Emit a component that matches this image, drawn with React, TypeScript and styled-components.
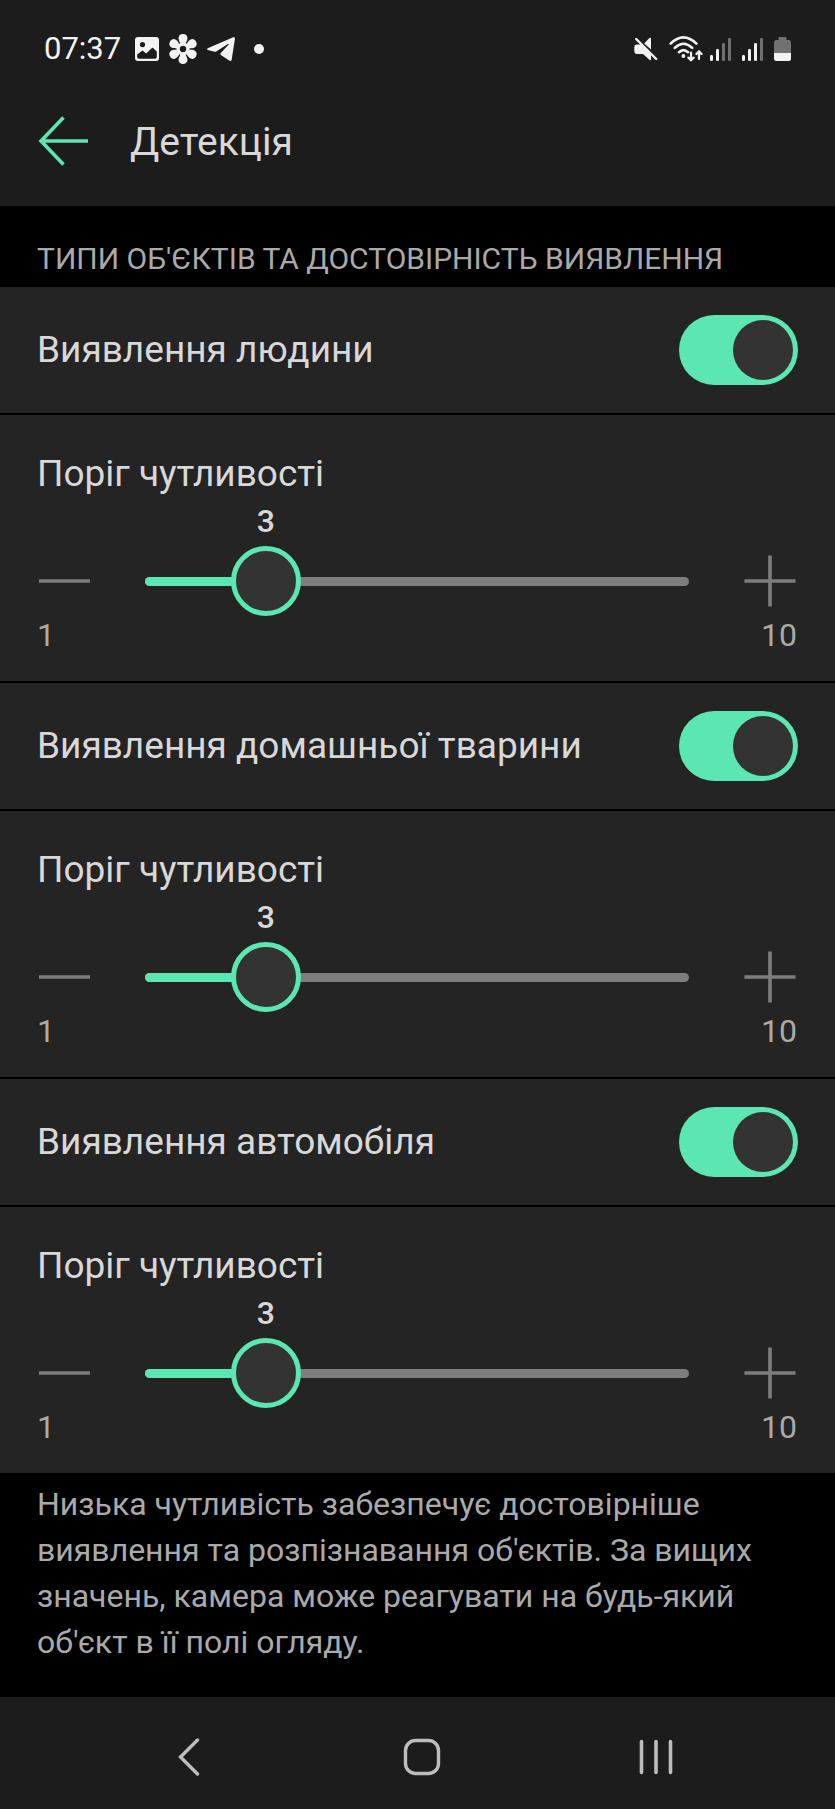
import React, { useId, useState } from "react";
import styled, { createGlobalStyle } from "styled-components";

const color = {
  bar: "#1c1c1c",
  row: "#242424",
  accent: "#5ce6b4",
  knob: "#333333",
  rail: "#7d7d7d",
  text: "#d8d8d8",
  muted: "#aaaaaa",
  status: "#f2f2f2",
  nav: "#bdbdbd",
};

const GlobalStyle = createGlobalStyle`
  *, *::before, *::after { box-sizing: border-box; }
  body {
    margin: 0;
    background: #000;
    color: ${color.text};
    font-family: Roboto, "Noto Sans", sans-serif;
  }
`;

const Screen = styled.div`
  display: flex;
  flex-direction: column;
  min-height: 100vh;
`;

const StatusBar = styled.div`
  display: flex;
  justify-content: space-between;
  align-items: center;
  height: 76px;
  padding: 22px 44px 0;
  background: ${color.bar};
  color: ${color.status};
`;

const StatusGroup = styled.div<{ $gap: number }>`
  display: flex;
  align-items: center;
  gap: ${(p) => p.$gap}px;

  svg {
    display: block;
  }
`;

const Clock = styled.time`
  margin-right: 5px;
  font-size: 31px;
  line-height: 36px;
`;

const Dot = styled.span`
  width: 10px;
  height: 10px;
  margin-left: 10px;
  border-radius: 50%;
  background: ${color.status};
`;

const Header = styled.header`
  display: flex;
  align-items: center;
  gap: 42px;
  height: 130px;
  padding: 0 38px;
  background: ${color.bar};
`;

const IconButton = styled.button`
  display: flex;
  align-items: center;
  justify-content: center;
  padding: 0;
  border: 0;
  background: none;
  color: inherit;
  cursor: pointer;
`;

const BackButton = styled(IconButton)`
  color: ${color.accent};
`;

const Title = styled.h1`
  margin: 0;
  padding-top: 2px;
  font-size: 39px;
  font-weight: 400;
  line-height: 44px;
`;

const SectionTitle = styled.h2`
  margin: 0;
  padding: 35px 37px 10px;
  color: ${color.muted};
  font-size: 30px;
  font-weight: 400;
  line-height: 36px;
  text-transform: uppercase;
`;

const Settings = styled.div`
  display: flex;
  flex-direction: column;
  gap: 2px;
`;

const ToggleRow = styled.label`
  display: flex;
  align-items: center;
  justify-content: space-between;
  height: 126px;
  padding: 0 37px;
  background: ${color.row};
  font-size: 37px;
  line-height: 44px;
`;

const Switch = styled.input`
  appearance: none;
  flex: none;
  display: flex;
  align-items: center;
  width: 119px;
  height: 70px;
  margin: 0;
  padding: 0 5px;
  border-radius: 35px;
  background: ${color.rail};
  cursor: pointer;

  &::before {
    content: "";
    width: 60px;
    height: 60px;
    border-radius: 50%;
    background: ${color.knob};
  }

  &:checked {
    justify-content: flex-end;
    background: ${color.accent};
  }
`;

const SliderPanel = styled.section`
  height: 266px;
  padding: 37px 38px 0 37px;
  background: ${color.row};
`;

const SliderLabel = styled.label`
  display: block;
  font-size: 37px;
  line-height: 44px;
`;

const SliderRow = styled.div`
  display: flex;
  align-items: center;
  margin-top: 50px;
`;

const StepButton = styled(IconButton)`
  width: 54px;
  height: 70px;
  color: ${color.rail};
`;

const SliderTrack = styled.div`
  position: relative;
  flex: 1;
  display: grid;
  align-items: center;
  margin: 0 54px;
`;

const Rail = styled.div`
  grid-area: 1 / 1;
  height: 9px;
  border-radius: 5px;
  background: ${color.rail};
  overflow: hidden;
`;

const Fill = styled.div`
  height: 100%;
  background: ${color.accent};
`;

const Range = styled.input`
  grid-area: 1 / 1;
  appearance: none;
  height: 70px;
  margin: 0 -35px;
  background: none;
  cursor: pointer;

  &::-webkit-slider-thumb {
    appearance: none;
    width: 70px;
    height: 70px;
    border: 5px solid ${color.accent};
    border-radius: 50%;
    background: ${color.knob};
  }
`;

const Value = styled.output`
  position: absolute;
  bottom: 100%;
  transform: translateX(-50%);
  padding-bottom: 6px;
  font-size: 32px;
  font-weight: 500;
  line-height: 38px;
`;

const Limits = styled.div`
  display: flex;
  justify-content: space-between;
  color: ${color.muted};
  font-size: 32px;
  line-height: 38px;
`;

const Hint = styled.p`
  flex: 1;
  margin: 0;
  padding: 8px 37px 31px;
  color: ${color.muted};
  font-size: 32px;
  line-height: 46px;
`;

const NavBar = styled.nav`
  display: grid;
  grid-template-columns: repeat(3, 1fr);
  height: 112px;
  padding: 8px 62px 0 72px;
  background: ${color.bar};
  color: ${color.nav};
`;

function PictureIcon() {
  return (
    <svg width="24" height="24" viewBox="0 0 24 24" fill="currentColor">
      <path
        fillRule="evenodd"
        d="M3 0H21Q24 0 24 3V21Q24 24 21 24H3Q0 24 0 21V3Q0 0 3 0ZM7.5 5A2.6 2.6 0 1 0 7.5 10.2A2.6 2.6 0 1 0 7.5 5ZM2.2 17.5V20Q2.2 21.8 4 21.8H20Q21.8 21.8 21.8 20V14.5L17.5 10.4L11.2 16.6L7.5 13.4Z"
      />
    </svg>
  );
}

function FlowerIcon() {
  return (
    <svg width="30" height="30" viewBox="-15 -15 30 30" fill="currentColor">
      {[0, 60, 120, 180, 240, 300].map((angle) => (
        <path
          key={angle}
          transform={`rotate(${angle})`}
          d="M-2 -3.4C-2.2 -6 -4.5 -8 -4.5 -10.8C-4.5 -13.5 -2.6 -15 0 -15S4.5 -13.5 4.5 -10.8C4.5 -8 2.2 -6 2 -3.4Z"
        />
      ))}
      <circle r="4.9" fill="none" stroke="currentColor" strokeWidth="3.2" />
    </svg>
  );
}

function PlaneIcon() {
  return (
    <svg width="28" height="24" viewBox="0 0 28 24" fill="currentColor">
      <path d="M.7 11.2L26.2.3Q28.2-.3 27.9 1.9L24.7 22.4Q24.3 24.7 22.2 23.5L14.2 18.2Q12.7 17 14 15.8L21.5 7.8Q22 6.5 20.5 7.2L9.6 14.2Q8.2 15 6.6 14.6L.8 12.9Q-.6 12.1.7 11.2Z" />
    </svg>
  );
}

function MuteIcon() {
  return (
    <svg width="24" height="24" viewBox="0 0 24 24" fill="currentColor">
      <path d="M10.2 6.4L15.4 1Q17 0 17 1.8V12.6Z" />
      <path d="M.3 10Q.3 7.6 2.6 7.6H7L17 17V22Q17 24 15.4 22.8L9 17H2.6Q.3 17 .3 14.6Z" />
      <path d="M2.2 2L22.2 22" stroke="currentColor" strokeWidth="2.4" strokeLinecap="round" />
    </svg>
  );
}

function WifiIcon() {
  return (
    <svg width="34" height="26" viewBox="0 0 34 26" fill="none" stroke="currentColor" strokeWidth="2.6" strokeLinecap="round">
      <path d="M1.6 7.6Q14.5-4.8 27.4 7.6M5.8 11.9Q14.5 3.6 23.2 11.9M10 16.2Q14.5 12 19 16.2" />
      <circle cx="14.4" cy="20" r="1.9" fill="currentColor" stroke="none" />
      <path
        d="M22 16.5V24M19.4 21.6L22 24.2L24.6 21.6M30 23V15.6M27.4 18L30 15.4L32.6 18"
        strokeWidth="2.2"
      />
    </svg>
  );
}

function SignalIcon({ level }: { level: number }) {
  return (
    <svg width="21" height="24" viewBox="0 0 21 24" fill="currentColor">
      {[6, 12, 18, 23].map((height, i) => (
        <rect
          key={height}
          x={i * 6}
          y={24 - height}
          width="3"
          height={height}
          rx="1.2"
          opacity={i < level ? 1 : 0.4}
        />
      ))}
    </svg>
  );
}

function BatteryIcon() {
  return (
    <svg width="17" height="24" viewBox="0 0 17 24" fill="currentColor">
      <path
        opacity="0.4"
        d="M4.5 1Q4.5 0 5.5 0H11.5Q12.5 0 12.5 1V3H14.5Q17 3 17 5.5V16H0V5.5Q0 3 2.5 3H4.5Z"
      />
      <path d="M0 16H17V21.5Q17 24 14.5 24H2.5Q0 24 0 21.5Z" />
    </svg>
  );
}

interface SettingProps {
  title: string;
}

function DetectionSetting({ title }: SettingProps) {
  const id = useId();
  const [enabled, setEnabled] = useState(true);
  const [value, setValue] = useState(3);
  const min = 1;
  const max = 10;
  const position = `${((value - min) / (max - min)) * 100}%`;

  return (
    <>
      <ToggleRow>
        {title}
        <Switch
          type="checkbox"
          role="switch"
          checked={enabled}
          onChange={(e) => setEnabled(e.target.checked)}
        />
      </ToggleRow>
      <SliderPanel>
        <SliderLabel htmlFor={id}>Поріг чутливості</SliderLabel>
        <SliderRow>
          <StepButton type="button" aria-label="Зменшити" onClick={() => setValue(Math.max(min, value - 1))}>
            <svg width="54" height="54" viewBox="0 0 54 54" stroke="currentColor" strokeWidth="3.6">
              <path d="M2 27H53" />
            </svg>
          </StepButton>
          <SliderTrack>
            <Rail>
              <Fill style={{ width: position }} />
            </Rail>
            <Range
              id={id}
              type="range"
              min={min}
              max={max}
              value={value}
              onChange={(e) => setValue(Number(e.target.value))}
            />
            <Value htmlFor={id} style={{ left: position }}>
              {value}
            </Value>
          </SliderTrack>
          <StepButton type="button" aria-label="Збільшити" onClick={() => setValue(Math.min(max, value + 1))}>
            <svg width="54" height="54" viewBox="0 0 54 54" stroke="currentColor" strokeWidth="3.6">
              <path d="M1.5 27H52.5M27 1.5V52.5" />
            </svg>
          </StepButton>
        </SliderRow>
        <Limits>
          <span>{min}</span>
          <span>{max}</span>
        </Limits>
      </SliderPanel>
    </>
  );
}

export default function App() {
  return (
    <Screen>
      <GlobalStyle />
      <StatusBar>
        <StatusGroup $gap={9}>
          <Clock>07:37</Clock>
          <PictureIcon />
          <FlowerIcon />
          <PlaneIcon />
          <Dot />
        </StatusGroup>
        <StatusGroup $gap={11}>
          <MuteIcon />
          <StatusGroup $gap={7}>
            <WifiIcon />
            <SignalIcon level={2} />
          </StatusGroup>
          <SignalIcon level={3} />
          <BatteryIcon />
        </StatusGroup>
      </StatusBar>
      <Header>
        <BackButton type="button" aria-label="Назад">
          <svg width="50" height="50" viewBox="0 0 50 50" fill="none" stroke="currentColor" strokeWidth="3.6">
            <path d="M25.5 1.5L3 25L25.5 48.5M3 25H50" />
          </svg>
        </BackButton>
        <Title>Детекція</Title>
      </Header>
      <SectionTitle>Типи об'єктів та достовірність виявлення</SectionTitle>
      <Settings>
        <DetectionSetting title="Виявлення людини" />
        <DetectionSetting title="Виявлення домашньої тварини" />
        <DetectionSetting title="Виявлення автомобіля" />
      </Settings>
      <Hint>
        Низька чутливість забезпечує достовірніше виявлення та розпізнавання об'єктів. За вищих
        значень, камера може реагувати на будь-який об'єкт в її полі огляду.
      </Hint>
      <NavBar>
        <IconButton type="button" aria-label="Назад">
          <svg width="22" height="38" viewBox="0 0 22 38" fill="none" stroke="currentColor" strokeWidth="3.4" strokeLinecap="round">
            <path d="M19.5 2L2.5 19L19.5 36" />
          </svg>
        </IconButton>
        <IconButton type="button" aria-label="Головний екран">
          <svg width="38" height="38" viewBox="0 0 38 38" fill="none" stroke="currentColor" strokeWidth="3.4">
            <rect x="2.5" y="2.5" width="33" height="33" rx="10" />
          </svg>
        </IconButton>
        <IconButton type="button" aria-label="Останні програми">
          <svg width="34" height="38" viewBox="0 0 34 38" stroke="currentColor" strokeWidth="3.6" strokeLinecap="round">
            <path d="M2.5 3.5V34.5M17 3.5V34.5M31.5 3.5V34.5" />
          </svg>
        </IconButton>
      </NavBar>
    </Screen>
  );
}
